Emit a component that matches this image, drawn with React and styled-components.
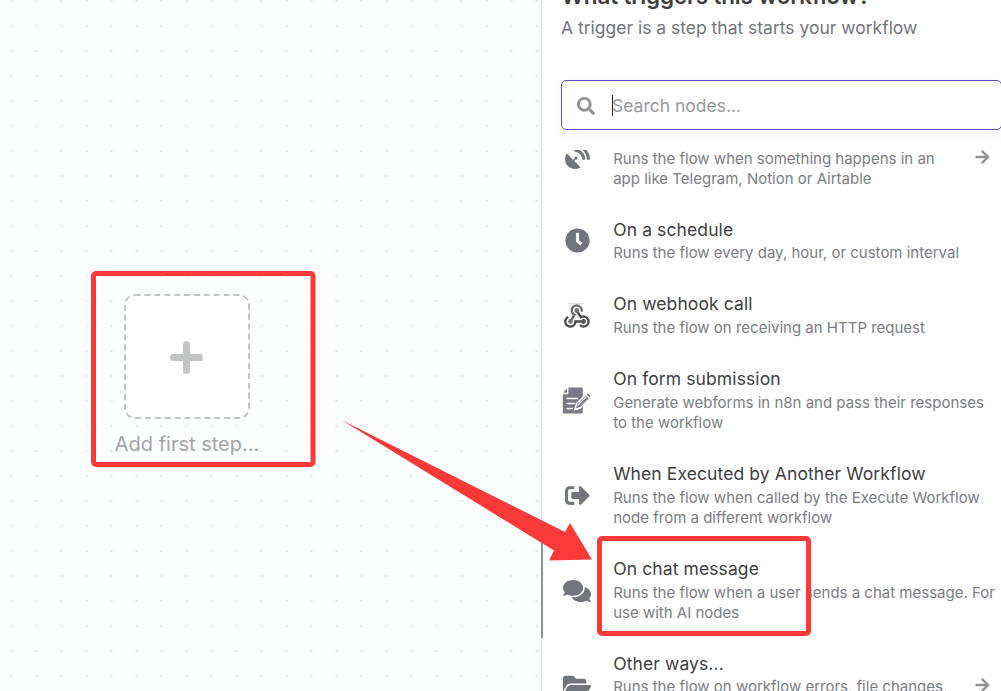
import React from "react";
import styled, { createGlobalStyle } from "styled-components";
import {
  FaSatelliteDish, FaClock, FaSignOutAlt, FaComments, FaFolderOpen,
  FaSearch, FaPlus, FaArrowRight,
} from "react-icons/fa";

const GlobalStyle = createGlobalStyle`
  * { box-sizing: border-box; }
  body { margin: 0; overflow: hidden; font-family: Inter, "Liberation Sans", sans-serif; }
`;

const Page = styled.div`
  position: relative;
  display: flex;
  width: 1001px;
  height: 691px;
  overflow: hidden;
  background: #fff;
`;

const Canvas = styled.main`
  position: relative;
  flex: 0 0 541px;
  background-color: #fdfeff;
  background-image: radial-gradient(circle at 11.5px 1px, #e3e4e9 0.6px, transparent 1.6px);
  background-size: 25px 25px;
`;

const FirstStep = styled.div`
  position: absolute;
  left: 87px;
  top: 294px;
  width: 200px;
  display: flex;
  flex-direction: column;
  align-items: center;
`;

const StepButton = styled.button`
  position: relative;
  display: grid;
  place-items: center;
  width: 126px;
  height: 125px;
  padding: 1px 1px 0 0;
  border: 0;
  background: none;
  color: #c3c4c8;
`;

const DashedFrame = styled.svg`
  position: absolute;
  inset: 0;
`;

const PlusIcon = styled(FaPlus)`
  position: relative;
  width: 37px;
  height: 37px;
`;

const StepLabel = styled.div`
  margin-top: 12px;
  font-size: 20px;
  line-height: 26px;
  color: #a3a4a8;
  white-space: nowrap;
`;

const Panel = styled.aside`
  flex: 0 0 460px;
  display: flex;
  flex-direction: column;
  border-left: 1px solid #dbdfe7;
  background: #fff;
`;

const PanelHeader = styled.header`
  flex: 0 0 80px;
  display: flex;
  flex-direction: column;
  justify-content: flex-start;
  padding-left: 19px;
`;

const Heading = styled.h1`
  margin: -19px 0 0;
  font-size: 22.5px;
  line-height: 30px;
  font-weight: 600;
  letter-spacing: -0.16px;
  color: #404040;
  white-space: nowrap;
`;

const Subtitle = styled.p`
  margin: 5px 0 0;
  font-size: 17.5px;
  line-height: 24px;
  letter-spacing: -0.01px;
  color: #73757c;
  white-space: nowrap;
`;

const SearchBox = styled.div`
  flex: 0 0 50px;
  width: 441px;
  margin-left: 19px;
  padding: 1px 0 0 14.5px;
  display: flex;
  align-items: center;
  border: 1px solid #5d4dc6;
  border-radius: 5px;
  background: #fff;
  color: #909298;
  box-shadow: 0 4px 12px rgba(68, 28, 23, 0.04);
`;

const Caret = styled.span`
  width: 1px;
  height: 21px;
  margin-left: 17.5px;
  margin-right: -1px;
  background: #222;
`;

const Placeholder = styled.span`
  font-size: 17.5px;
  line-height: 24px;
  color: #96989d;
`;

const Results = styled.div`
  flex: 1;
  margin: 20px 0 0 -1px;
  min-height: 0;
  overflow: hidden;
`;

const List = styled.div`
  margin-top: -41px;
`;

const Row = styled.div`
  display: flex;
  align-items: center;
  height: ${({ $lines }) => 55 + $lines * 20}px;
  padding-left: 18px;
  border-left: 2px solid ${({ $active }) => ($active ? "#8f9198" : "transparent")};

  &:first-child {
    height: 94px;
    padding-top: 1px;
  }

  &:last-child {
    padding-bottom: 2px;
  }
`;

const IconSlot = styled.div`
  flex: 0 0 32px;
  display: grid;
  place-items: center;
  color: #73757d;
`;

const Copy = styled.div`
  width: 390px;
  margin-left: 20.2px;
`;

const Title = styled.div`
  margin-top: ${({ $drop = 0 }) => $drop - 3}px;
  margin-bottom: ${({ $drop = 0 }) => 2 - $drop}px;
  font-size: 17.5px;
  line-height: 25px;
  letter-spacing: 0.105px;
  color: #404040;
  white-space: nowrap;
`;

const Description = styled.div`
  font-size: 15px;
  line-height: 20px;
  color: #7b7d84;
  white-space: pre;
`;

const RowArrow = styled(FaArrowRight)`
  flex: none;
  width: 15px;
  height: 16px;
  margin-left: -28.2px;
  color: #909298;
`;

const Annotations = styled.svg`
  position: absolute;
  inset: 0;
  pointer-events: none;
`;

const WebhookIcon = () => (
  <svg width="26" height="26" viewBox="0 0 26 26" fill="none" strokeWidth="2.4">
    <path d="M5 .5h15" stroke="#dedede" strokeWidth="1" />
    <path d="M6.5 18.5L10.3 11.8A5 5 0 1 1 17.6 8.8" stroke="#6b6b6b" />
    <path d="M12.8 7.5L16.9 14.3A5 5 0 1 1 16 22.1" stroke="#4d4d4d" />
    <path d="M4.3 14A5 5 0 1 0 11.3 18.5H19.5" stroke="#4b4b4b" />
    <circle cx="12.8" cy="7.5" r="2.4" fill="#777" />
    <circle cx="6.5" cy="18.5" r="2.4" fill="#777" />
    <circle cx="19.5" cy="18.5" r="2.4" fill="#555" />
  </svg>
);

const FormIcon = () => (
  <svg width="30" height="27" viewBox="0 0 30 27">
    <path d="M6.4 .5H19.5Q20.8 .5 20.8 1.8V25.2Q20.8 26.5 19.5 26.5H2Q.8 26.5 .8 25.2V7.2H5.3Q6.4 7.2 6.4 6Z" fill="#7a7a87" />
    <path d="M5 1.2V5.8H1.1Z" fill="#7a7a87" />
    <path d="M5 11.5H15.5M5 16.5H12.5M5 21.5H10.5" stroke="#fff" strokeWidth="1.5" strokeLinecap="round" />
    <path d="M12.8 22.5L14.7 16.3L24.6 6.7Q26.2 5.4 27.7 6.8L28.5 7.7Q29.8 9.2 28.3 10.8L18.4 20.7Z" fill="#7a7a87" stroke="#fff" strokeWidth="1.5" />
    <path d="M16.2 17.8L24.2 9.9M24.7 8.3L27 10.7" stroke="#fff" strokeWidth="1.2" strokeLinecap="round" />
    <path d="M15 22.4L18 20.8" stroke="#fff" strokeWidth="1.4" strokeLinecap="round" />
  </svg>
);

const triggers = [
  { title: "On app event", text: "Runs the flow when something happens in an\napp like Telegram, Notion or Airtable", lines: 2, icon: <FaSatelliteDish size={25} />, arrow: true },
  { title: "On a schedule", text: "Runs the flow every day, hour, or custom interval", lines: 1, icon: <FaClock size={25} />, drop: 1 },
  { title: "On webhook call", text: "Runs the flow on receiving an HTTP request", lines: 1, icon: <WebhookIcon /> },
  { title: "On form submission", text: "Generate webforms in n8n and pass their responses\nto the workflow", lines: 2, icon: <FormIcon /> },
  { title: "When Executed by Another Workflow", text: "Runs the flow when called by the Execute Workflow\nnode from a different workflow", lines: 2, icon: <FaSignOutAlt size={25} /> },
  { title: "On chat message", text: "Runs the flow when a user sends a chat message. For\nuse with AI nodes", lines: 2, icon: <FaComments size={28} />, active: true },
  { title: "Other ways...", text: "Runs the flow on workflow errors, file changes,\netc.", lines: 2, icon: <FaFolderOpen size={28} />, arrow: true, drop: 1 },
];

export default function App() {
  return (
    <Page>
      <GlobalStyle />
      <Canvas>
        <FirstStep>
          <StepButton aria-label="Add first step">
            <DashedFrame width="126" height="125">
              <rect x="1" y="1" width="124" height="123" rx="10" fill="#fff" stroke="#c3c4c8" strokeWidth="2" strokeDasharray="6.1 3.8" strokeDashoffset="0.5" />
            </DashedFrame>
            <PlusIcon />
          </StepButton>
          <StepLabel>Add first step...</StepLabel>
        </FirstStep>
      </Canvas>
      <Panel>
        <PanelHeader>
          <Heading>What triggers this workflow?</Heading>
          <Subtitle>A trigger is a step that starts your workflow</Subtitle>
        </PanelHeader>
        <SearchBox>
          <FaSearch size={18} />
          <Caret />
          <Placeholder>Search nodes...</Placeholder>
        </SearchBox>
        <Results>
          <List>
            {triggers.map((t) => (
              <Row key={t.title} $lines={t.lines} $active={t.active}>
                <IconSlot>{t.icon}</IconSlot>
                <Copy>
                  <Title $drop={t.drop}>{t.title}</Title>
                  <Description>{t.text}</Description>
                </Copy>
                {t.arrow && <RowArrow />}
              </Row>
            ))}
          </List>
        </Results>
      </Panel>
      <Annotations width="1001" height="691">
        <g fill="none" stroke="#fc3939" strokeWidth="5">
          <rect x="93.5" y="273.5" width="219.5" height="191" rx="2.5" />
          <rect x="599.5" y="538.5" width="209" height="95" rx="2.5" />
        </g>
        <path d="M341.5 420L565 532L570 523L592 559.5L549 560.5L554 550.5Z" fill="#fc3939" />
      </Annotations>
    </Page>
  );
}
